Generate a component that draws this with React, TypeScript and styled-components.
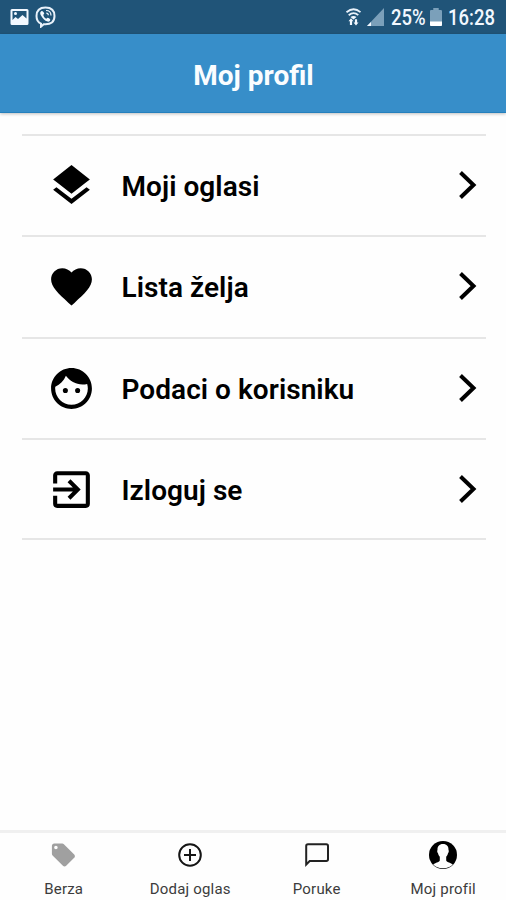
import React from "react";
import styled, { createGlobalStyle } from "styled-components";

const GlobalStyle = createGlobalStyle`
  * { box-sizing: border-box; }
  body { margin: 0; background: #fefefe; font-family: Roboto, "Liberation Sans", sans-serif; }
`;

const Screen = styled.div`
  width: 506px;
  height: 900px;
  display: flex;
  flex-direction: column;
  overflow: hidden;
`;

const StatusBar = styled.div`
  height: 34px;
  flex: none;
  display: flex;
  justify-content: space-between;
  align-items: center;
  padding: 0 12px 0 10px;
  background: #205478;
  color: #f2f8ff;
`;

const StatusGroup = styled.div`
  display: flex;
  align-items: center;
`;

const StatusText = styled.span<{ $width: number }>`
  width: ${(p) => p.$width}px;
  font-size: 22px;
  font-weight: 500;
  line-height: 34px;
  padding-top: 2px;
  transform: scaleX(0.84);
  transform-origin: left center;
  white-space: nowrap;
`;

const StatusIcon = styled.svg<{ $gap: number }>`
  display: block;
  flex: none;
  margin-right: ${(p) => p.$gap}px;
`;

const Header = styled.header`
  height: 79px;
  flex: none;
  display: flex;
  align-items: center;
  justify-content: center;
  background: #378ec9;
  border-bottom: 1px solid #2580bd;
  box-shadow: 0 1px 3px rgba(0, 0, 0, 0.25);
`;

const Title = styled.h1`
  margin: 0;
  padding: 5px 0 0 1px;
  color: #fafdff;
  font-size: 28px;
  font-weight: 700;
`;

const Menu = styled.nav`
  flex: 1;
  margin: 21px 20px 0 22px;
`;

const MenuRow = styled.a`
  height: 101.3px;
  display: flex;
  align-items: center;
  border-top: 2px solid #e6e6e6;
  padding: 0 9px 0 25px;
  color: #000;
  &:last-child {
    height: 102.5px;
    border-bottom: 2px solid #e6e6e6;
  }
`;

const MenuIcon = styled.svg`
  width: 49px;
  height: 49px;
  flex: none;
  fill: #000;
`;

const MenuLabel = styled.span`
  flex: 1;
  padding: 3px 0 0 25.5px;
  font-size: 28px;
  font-weight: 600;
  line-height: 34px;
  letter-spacing: 0.05px;
`;

const Chevron = styled.svg`
  flex: none;
  margin-top: -1px;
`;

const TabBar = styled.nav`
  height: 70px;
  flex: none;
  display: grid;
  grid-template-columns: repeat(4, 1fr);
  border-top: 3px solid #f0f0f0;
`;

const Tab = styled.a`
  display: flex;
  flex-direction: column;
  align-items: center;
  padding-left: 1px;
  color: #3c3c3c;
`;

const TabIcon = styled.svg`
  display: block;
  width: 30px;
  height: 30px;
  margin-top: 7px;
`;

const TabLabel = styled.span`
  margin-top: 10px;
  font-size: 15px;
  line-height: 18px;
  letter-spacing: 0.2px;
  white-space: nowrap;
`;

const menu = [
  {
    label: "Moji oglasi",
    path: "M11.99 18.54l-7.37-5.73L3 14.07l9 7 9-7-1.63-1.27-7.38 5.74zM12 16l7.36-5.73L21 9l-9-7-9 7 1.63 1.27L12 16z",
  },
  {
    label: "Lista želja",
    path: "M12 21.35l-1.45-1.32C5.4 15.36 2 12.28 2 8.5 2 5.42 4.42 3 7.5 3c1.74 0 3.41.81 4.5 2.09C13.09 3.81 14.76 3 16.5 3 19.58 3 22 5.42 22 8.5c0 3.78-3.4 6.86-8.55 11.54L12 21.35z",
  },
  {
    label: "Podaci o korisniku",
    path: "M9 11.75a1.25 1.25 0 1 0 0 2.5a1.25 1.25 0 0 0 0-2.5zm6 0a1.25 1.25 0 1 0 0 2.5a1.25 1.25 0 0 0 0-2.5zM12 2C6.48 2 2 6.48 2 12s4.48 10 10 10 10-4.48 10-10S17.52 2 12 2zm0 18c-4.41 0-8-3.59-8-8 0-.29.02-.58.05-.86 2.36-1.05 4.23-2.98 5.21-5.37C11.07 8.33 14.05 10 17.42 10c.78 0 1.53-.09 2.25-.26.21.71.33 1.47.33 2.26 0 4.41-3.59 8-8 8z",
  },
  {
    label: "Izloguj se",
    path: "M19 3H5C3.89 3 3 3.89 3 5V9H5V5H19V19H5V15H3V19A2 2 0 0 0 5 21H19A2 2 0 0 0 21 19V5C21 3.89 20.1 3 19 3M10.08 15.58L11.5 17L16.5 12L11.5 7L10.08 8.41L12.67 11H3V13H12.67L10.08 15.58Z",
  },
];

const tabs = [
  {
    label: "Berza",
    icon: (
      <path
        transform="translate(.6 1.2) scale(1.15)"
        fill="#a0a0a0"
        d="M21.41 11.58l-9-9C12.05 2.22 11.55 2 11 2H4c-1.1 0-2 .9-2 2v7c0 .55.22 1.05.59 1.42l9 9c.36.36.86.58 1.41.58.55 0 1.05-.22 1.41-.59l7-7c.37-.36.59-.86.59-1.41 0-.55-.23-1.06-.59-1.42zM5.5 7C4.67 7 4 6.33 4 5.5S4.67 4 5.5 4 7 4.67 7 5.5 6.33 7 5.5 7z"
      />
    ),
  },
  {
    label: "Dodaj oglas",
    icon: (
      <g fill="none" stroke="#151515" strokeWidth="2">
        <circle cx="15" cy="15" r="10.8" />
        <path d="M15 9v12M9 15h12" />
      </g>
    ),
  },
  {
    label: "Poruke",
    icon: (
      <path
        d="M4.2 24.5V6Q4.2 4.3 6 4.3H24.3Q26 4.3 26 6V19.3Q26 21 24.3 21H7.7L4.2 24.5Z"
        fill="none"
        stroke="#222"
        strokeWidth="2"
      />
    ),
  },
  {
    label: "Moj profil",
    icon: (
      <>
        <circle cx="15" cy="15" r="14" fill="#000" />
        <path
          d="M15 4C11.200 4 9.300 6.500 9.500 10c-.6.700-.3 2.400.5 3.200.3 1.500 1 2.700 1.800 3.500v3.800c-.8 1.900-4.800 2.200-6.600 4A13.300 13.300 0 0 0 15 28.300a13.300 13.300 0 0 0 9.800-3.800c-1.800-1.800-5.800-2.100-6.600-4v-3.800c.8-.8 1.500-2 1.800-3.500.8-.8 1.100-2.500.5-3.200.2-3.500-1.700-6-5.500-6Z"
          fill="#fff"
        />
      </>
    ),
  },
];

export default function App() {
  return (
    <Screen>
      <GlobalStyle />
      <StatusBar>
        <StatusGroup>
          <StatusIcon $gap={6} width="19" height="18" viewBox="0 0 19 18">
            <path
              fill="#f2f8ff"
              fillRule="evenodd"
              d="M2 1h15q1.5 0 1.5 1.5v13Q18.500 17 17 17H2Q.5 17 .5 15.500v-13Q.5 1 2 1ZM2.500 3v9l3-3 2.500 2 4.500-4 4 3.500V3Z"
            />
            <circle cx="5.500" cy="5.500" r="1.500" fill="#f2f8ff" />
          </StatusIcon>
          <StatusIcon $gap={0} width="21" height="22" viewBox="0 0 21 22">
            <path
              d="M10.500 1.500C4 1.500 1.500 4.500 1.500 10c0 4 1.500 6.500 4.500 7.600v3l2.700-2.400c7.500.6 10.800-2.200 10.800-8.200 0-5.500-2.500-8.500-9-8.500Z"
              fill="none"
              stroke="#e8f1fa"
              strokeWidth="2"
            />
            <path
              d="M6.300 5.200C4.800 6 5 7.600 6 9.400c1.600 3 3.600 5 6.600 6.200 1.200.4 2.300-.4 2.700-1.600.2-.8-2-2.400-2.800-2.200-.6.2-.7 1-1.400.9C9.700 12 8.500 10.500 8.300 9c0-.6.900-.8.900-1.500 0-.8-1.600-2.800-2.900-2.300Z"
              fill="#f2f8ff"
            />
            <path d="M11 4.500c3.200 0 5 2 5 5M11.300 7.200c1.300 0 2 .8 2 2" fill="none" stroke="#f2f8ff" strokeWidth="1.200" />
          </StatusIcon>
        </StatusGroup>
        <StatusGroup>
          <StatusIcon $gap={6} width="16" height="18" viewBox="0 0 16 18">
            <g fill="none" stroke="#e8f1fa" strokeWidth="1.800">
              <path d="M1.500 4.200Q8.700-1.800 15.500 4.200M3.700 7.200q5-4.200 9.600 0" />
            </g>
            <path d="M5.500 9q3-2.200 6 0l-3 2.500ZM6 10.200l2.500 3H7.100V17H4.900v-3.800H3.500ZM11 17.500l-2.500-3h1.400v-3.300h2.200v3.300h1.400Z" fill="#f2f8ff" />
          </StatusIcon>
          <StatusIcon $gap={7} width="17" height="18" viewBox="0 0 17 18">
            <path d="M17 0v18H0Z" fill="#7ba0ba" />
            <path d="M4 14v4H0Z" fill="#f2f8ff" />
          </StatusIcon>
          <StatusText $width={39}>25%</StatusText>
          <StatusIcon $gap={6} width="12" height="18" viewBox="0 0 11 18" preserveAspectRatio="none">
            <path d="M3 0h5v2h2q1 0 1 1v14q0 1-1 1H1q-1 0-1-1V3q0-1 1-1h2Z" fill="#7ba0ba" />
            <path d="M0 13.500h11V17q0 1-1 1H1q-1 0-1-1Z" fill="#fff" />
          </StatusIcon>
          <StatusText $width={46}>16:28</StatusText>
        </StatusGroup>
      </StatusBar>
      <Header>
        <Title>Moj profil</Title>
      </Header>
      <Menu>
        {menu.map((item) => (
          <MenuRow key={item.label}>
            <MenuIcon viewBox="0 0 24 24">
              <path d={item.path} />
            </MenuIcon>
            <MenuLabel>{item.label}</MenuLabel>
            <Chevron width="19" height="30" viewBox="0 0 19 30">
              <path d="M2.500 2.500 15.500 15 2.500 27.500" fill="none" stroke="#000" strokeWidth="4" />
            </Chevron>
          </MenuRow>
        ))}
      </Menu>
      <TabBar>
        {tabs.map((tab) => (
          <Tab key={tab.label}>
            <TabIcon viewBox="0 0 30 30">{tab.icon}</TabIcon>
            <TabLabel>{tab.label}</TabLabel>
          </Tab>
        ))}
      </TabBar>
    </Screen>
  );
}
